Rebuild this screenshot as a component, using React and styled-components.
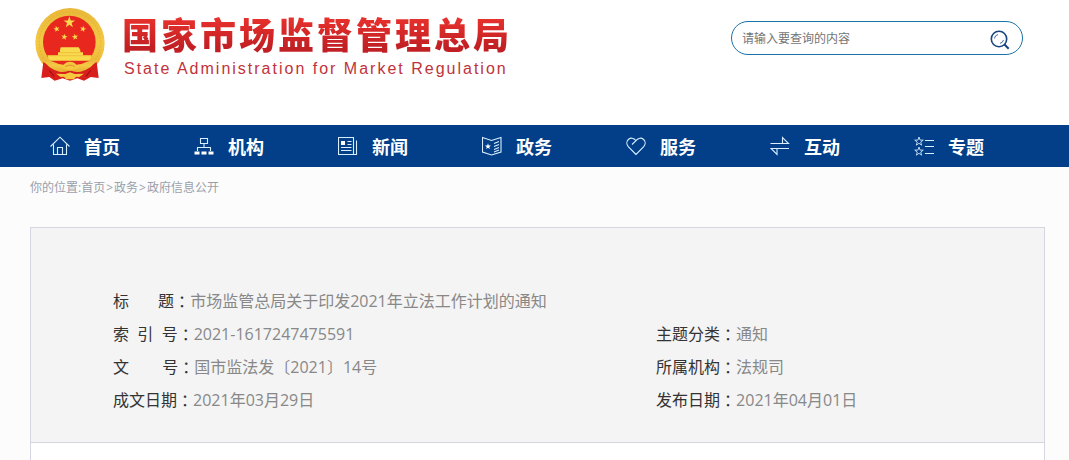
import React, { useState } from 'react'
import styled, { createGlobalStyle } from 'styled-components'

const GlobalStyle = createGlobalStyle`
  * {
    box-sizing: border-box;
  }
  body {
    margin: 0;
    background: #fcfcfc;
    font-family: "Open Sans", "Noto Sans CJK SC", sans-serif;
    font-size: 16px;
    color: #333;
  }
  a {
    color: inherit;
    text-decoration: none;
  }
`

const Header = styled.header`
  display: flex;
  justify-content: space-between;
  align-items: flex-start;
  height: 125px;
  padding: 7px 46px 0 34px;
  background: #fff;
`

const Brand = styled.a`
  display: flex;
  gap: 16px;
`

const BrandText = styled.div`
  display: flex;
  flex-direction: column;
  white-space: nowrap;
`

const BrandName = styled.h1`
  margin: 0;
  font-family: "Noto Sans CJK SC", sans-serif;
  font-size: 36px;
  font-weight: 900;
  line-height: 52px;
  letter-spacing: 3px;
  background: linear-gradient(#e5302c 25%, #c01f24 80%);
  background-clip: text;
  color: transparent;
`

const BrandSub = styled.span`
  padding-left: 2px;
  font-family: "Liberation Sans", Arial, sans-serif;
  font-size: 16px;
  line-height: 20px;
  letter-spacing: 2px;
  color: #c0333a;
`

const SearchForm = styled.form`
  display: flex;
  align-items: center;
  width: 292px;
  height: 34px;
  margin-top: 14px;
  padding: 0 10px;
  border: 1px solid #1a72a8;
  border-radius: 17px;
  background: #fff;
`

const SearchInput = styled.input`
  flex: 1;
  min-width: 0;
  padding: 0;
  border: 0;
  outline: 0;
  background: none;
  font: inherit;
  font-size: 12px;
  color: #333;

  &::placeholder {
    color: #757575;
    opacity: 1;
  }
`

const SearchButton = styled.button`
  display: flex;
  padding: 4px 2px 0;
  border: 0;
  background: none;
  cursor: pointer;
`

const Nav = styled.nav`
  display: grid;
  grid-template-columns: repeat(7, 1fr);
  height: 42px;
  padding: 0 11px 0 50px;
  background: #023f88;
`

const NavLink = styled.a`
  display: flex;
  align-items: center;
  gap: 14px;
  padding-bottom: 1px;
  color: #fff;
  font-size: 18px;
  font-weight: 700;
  white-space: nowrap;
`

const Crumbs = styled.nav`
  display: flex;
  gap: 1px;
  padding: 12px 30px 0;
  font-size: 12px;
  line-height: 18px;
  color: #9aa0ab;
`

const Card = styled.main`
  margin: 30px 24px 0 30px;
  border: 1px solid #d4d7e2;
  border-bottom: 0;
  background: #fff;
`

const MetaList = styled.dl`
  display: grid;
  grid-template-columns: 7fr 5fr;
  margin: 0;
  padding: 57px 0 25px 82px;
  border-bottom: 1px solid #d4d5dc;
  background: #f4f4f4;
`

const MetaItem = styled.div`
  display: flex;
  grid-column: ${props => props.$wide ? '1 / -1' : 'auto'};
  line-height: 33px;
`

const MetaLabel = styled.dt`
  display: flex;
  white-space: nowrap;
  color: #333;
`

// the TC face centres the full-width colon in its box
const Colon = styled.span`
  font-family: "Noto Sans CJK TC", sans-serif;
`

const MetaValue = styled.dd`
  margin: 0;
  color: #888;
`

const Content = styled.article`
  min-height: 17px;
`

const STAR = 'M0-10 2.4-3.1 9.5-3.1 3.8 1.2 5.9 8.1 0 4 -5.9 8.1 -3.8 1.2 -9.5-3.1 -2.4-3.1Z'

function Emblem() {
  return (
    <svg width="72" height="76" viewBox="0 0 216 228" aria-hidden="true">
      <defs>
        <linearGradient id="gold" x1="0" y1="0" x2="0" y2="1">
          <stop offset="0" stopColor="#e9b83a" />
          <stop offset="0.5" stopColor="#f3c945" />
          <stop offset="1" stopColor="#e8ae30" />
        </linearGradient>
      </defs>
      <circle cx="108" cy="107" r="104" fill="url(#gold)" />
      <circle cx="108" cy="107" r="92" fill="none" stroke="#dba22e" strokeWidth="4" strokeDasharray="5 5" opacity="0.4" />
      <circle cx="106" cy="105" r="79" fill="#e8281f" />
      <g fill="#f9da4c">
        <path d={STAR} transform="translate(106 46) scale(1.8)" />
        <path d={STAR} transform="translate(68 66) rotate(-15)" />
        <path d={STAR} transform="translate(147 66) rotate(15)" />
        <path d={STAR} transform="translate(91 90) rotate(10)" />
        <path d={STAR} transform="translate(123 90) rotate(-10)" />
        <path d="M80 121h54l5 8v7h8v9h26q-2 10-8 17H48q-6-7-8-17h32v-9h6v-7Z" />
      </g>
      <path d="M78 137h60M44 146h126" stroke="#eeb23a" strokeWidth="2" />
      <path d="M47 161h122L150 180H66Z" fill="#e8281f" />
      <path d="M28 165 60 182 108 192 156 182 188 165 194 213 170 210 150 221 130 214 108 221 86 214 62 221 46 210 22 213Z" fill="#d81f1c" />
      <path d="M26 156Q60 162 92 180L108 184 124 180Q156 162 190 156 176 184 140 194 122 197 108 190 94 197 76 194 40 184 26 156Z" fill="url(#gold)" />
      <path d="M108 164q12 0 19 9l15-2q-8 17-34 17t-34-17l15 2q7-9 19-9Z" fill="#f5c840" />
      <path d="M94 179q14-9 28 0" fill="none" stroke="#d9902a" strokeWidth="3" />
      <path d="M66 200 94 201 108 196 122 201 150 200 136 210 126 209 120 217H96L90 209 80 210Z" fill="#f5c840" />
      <path d="M46 190 60 208M170 190 156 208" stroke="#a81015" strokeWidth="4" />
    </svg>
  )
}

function SearchIcon() {
  return (
    <svg width="20" height="20" viewBox="0 0 20 20" fill="none" stroke="#17457f">
      <circle cx="9" cy="9" r="7.7" strokeWidth="1.6" />
      <path d="M14.5 14.5 18.7 18.7" strokeWidth="2" />
      <path d="M4.4 8.5A4.8 4.8 0 0 1 8 4.5M13.5 10A4.8 4.8 0 0 1 10 13.4" strokeWidth="0.8" />
    </svg>
  )
}

function NavIcon({ children }) {
  return (
    <svg width="20" height="20" viewBox="0 0 20 20" fill="none" stroke="#d9efff" strokeWidth="1.1" aria-hidden="true">
      {children}
    </svg>
  )
}

const menu = [
  { text: '首页', icon: <path d="M.5 10.5 10 1.2 19.5 10.5M3.5 8.5v10h13v-10M7.5 18.5v-7h5v7" /> },
  { text: '机构', icon: <>
    <path d="M6.5 2.5h7v5h-7ZM10 7.5v4M3.5 15v-3.5h13V15" />
    <path d="M.5 17h5M7.5 17h5M14.5 17h5" stroke="#fff" strokeWidth="3" />
  </> },
  { text: '新闻', icon: <>
    <path d="M.5 1.5h15v17h-15ZM18.5 4.5v14h-3M9.5 5.5h4M9.5 8.5h4M3 11.5h10.5M3 14.5h10.5" />
    <path d="M3 5h4v4H3Z" fill="#fff" stroke="none" />
  </> },
  { text: '政务', icon: <>
    <path d="M.5 1.5 9.5 4.5 19 1.5v14.5L9.5 19 .5 16ZM12 7.5l5-2M12 10.5l5-2M12 13.5l5-2M12 16l5-2" />
    <path d={STAR} transform="translate(6 10.5) scale(.32)" fill="#fff" stroke="none" />
  </> },
  { text: '服务', icon: <path d="M10 18.5 2.3 10.6C-2.3 5 5.2-1.5 10 4.6 14.8-1.5 22.3 5 17.7 10.6ZM10 4.6 6 8.5" /> },
  { text: '互动', icon: <path d="M.5 7.5h18L12.5 1.5v6M19 12.5H1L7 18.5v-6" /> },
  { text: '专题', icon: <>
    <path d={STAR} transform="translate(5 5.5) scale(.45)" strokeWidth="1.9" />
    <path d={STAR} transform="translate(5 15.5) scale(.45)" strokeWidth="1.9" />
    <path d="M11 4.5h9M11 10.5h9M11 17.5h9" />
  </> },
]

const crumbs = ['首页', '政务', '政府信息公开']

const meta = [
  { label: '标\u00a0\u00a0\u00a0\u00a0\u00a0\u00a0\u00a0题', value: '市场监管总局关于印发2021年立法工作计划的通知', wide: true },
  { label: '索\u00a0\u00a0引\u00a0\u00a0号', value: '2021-1617247475591' },
  { label: '主题分类', value: '通知' },
  { label: '文\u00a0\u00a0\u00a0\u00a0\u00a0\u00a0\u00a0\u00a0号', value: '国市监法发〔2021〕14号' },
  { label: '所属机构', value: '法规司' },
  { label: '成文日期', value: '2021年03月29日' },
  { label: '发布日期', value: '2021年04月01日' },
]

function App() {
  const [keyword, setKeyword] = useState('')

  return (
    <>
      <GlobalStyle />
      <Header>
        <Brand href="#home">
          <Emblem />
          <BrandText>
            <BrandName>国家市场监督管理总局</BrandName>
            <BrandSub>State Administration for Market Regulation</BrandSub>
          </BrandText>
        </Brand>
        <SearchForm role="search" onSubmit={e => e.preventDefault()}>
          <SearchInput
            type="text"
            aria-label="搜索"
            placeholder="请输入要查询的内容"
            value={keyword}
            onChange={e => setKeyword(e.target.value)}
          />
          <SearchButton type="submit" aria-label="搜索"><SearchIcon /></SearchButton>
        </SearchForm>
      </Header>

      <Nav>
        {menu.map(item => (
          <NavLink href="#" key={item.text}>
            <NavIcon>{item.icon}</NavIcon>
            {item.text}
          </NavLink>
        ))}
      </Nav>

      <Crumbs>
        <span>你的位置:<a href="#">{crumbs[0]}</a></span>
        {crumbs.slice(1).map(name => (
          <React.Fragment key={name}>
            <span>&gt;</span>
            <a href="#">{name}</a>
          </React.Fragment>
        ))}
      </Crumbs>

      <Card>
        <MetaList>
          {meta.map(item => (
            <MetaItem key={item.label} $wide={item.wide}>
              <MetaLabel>{item.label}<Colon>：</Colon></MetaLabel>
              <MetaValue>{item.value}</MetaValue>
            </MetaItem>
          ))}
        </MetaList>
        <Content />
      </Card>
    </>
  )
}

export default App
